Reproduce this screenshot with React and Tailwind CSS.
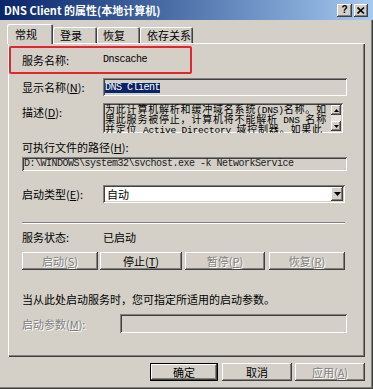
const sunken =
  'shadow-[inset_1px_1px_#808080,inset_-1px_-1px_#ffffff,inset_2px_2px_#404040,inset_-2px_-2px_#d4d0c8]';
const raised =
  'shadow-[inset_-1px_-1px_#404040,inset_1px_1px_#ffffff,inset_-2px_-2px_#808080]';
const mono = "font-['Liberation_Mono',monospace] text-[10px] tracking-[-0.5px]";
const descMono = "font-['Liberation_Mono',monospace] text-[9.5px] tracking-[-0.2px] leading-[0]";
const disabled = 'text-[#808080] [text-shadow:1px_1px_0_#ffffff]';

const Btn = ({ children, off, width, className = '' }) => (
  <div
    className={`h-full ${width} bg-[#d4d0c8] ${raised} flex items-center justify-center ${
      off ? disabled : 'text-black'
    } ${className}`}
  >
    {children}
  </div>
);

const Tab = ({ label, active, width, pad }) => (
  <div
    className={`${width} ${pad} bg-[#d4d0c8] flex items-center shadow-[inset_1px_1px_#ffffff,inset_-1px_0_#404040,inset_-2px_0_#808080] rounded-t-[2px] ${
      active ? 'h-[20px] relative z-10 -mb-px' : 'h-[16px] pb-[1px]'
    }`}
  >
    {label}
  </div>
);

export default function App() {
  return (
    <div className="w-[373px] h-[389px] bg-[#d4d0c8] overflow-hidden flex flex-col font-['Noto_Sans_CJK_SC',sans-serif] text-[11px] leading-[12px] text-black shadow-[inset_-1px_-1px_#404040,inset_-2px_-2px_#808080]">
      {/* title bar */}
      <div className="h-[20px] shrink-0 flex items-center pl-[4px] pr-[5px] bg-linear-to-r from-[#0a246a] to-[#a6caf0]">
        <span className="flex-1 text-white font-bold">DNS Client 的属性(本地计算机)</span>
        <div className={`w-[15px] h-[13px] bg-[#d4d0c8] ${raised} flex items-center justify-center font-['Liberation_Sans',sans-serif] font-bold text-[10px] leading-none`}>
          ?
        </div>
        <div className={`ml-[2px] w-[14px] h-[13px] bg-[#d4d0c8] ${raised} flex items-center justify-center`}>
          <svg width="8" height="7" viewBox="0 0 8 7">
            <path d="M0.5 0.5 L7 6.5 M7 0.5 L0.5 6.5" stroke="#000" strokeWidth="1.6" />
          </svg>
        </div>
      </div>

      {/* tabs */}
      <div className="h-[23px] shrink-0 flex items-end pl-[7px]">
        <Tab label="常规" active width="w-[46px]" pad="pl-[8px]" />
        <Tab label="登录" width="w-[44px]" pad="pl-[7px]" />
        <Tab label="恢复" width="w-[43px]" pad="pl-[6px]" />
        <Tab label="依存关系" width="w-[53px]" pad="pl-[7px]" />
      </div>

      {/* panel */}
      <div className="mx-[8px] h-[314px] shrink-0 flex flex-col shadow-[inset_1px_1px_#ffffff,inset_-1px_-1px_#404040,inset_-2px_-2px_#808080]">
        <div className="mt-[3px] ml-[1px] w-[183px] h-[28px] border-2 border-[#e3262d] rounded-[2px] flex items-center pl-[11px]">
          <span className="w-[81px]">服务名称:</span>
          <span className={mono}>Dnscache</span>
        </div>

        <div className="mt-[4px] ml-[14px] h-[18px] flex items-center">
          <span className="w-[81px]">
            显示名称(<u>N</u>):
          </span>
          <div className={`w-[244px] h-full bg-[#d4d0c8] ${sunken} pl-[2px] pt-[1px]`}>
            <span className={`${mono} bg-[#0a246a] text-white leading-[10px] inline-block`}>DNS Client</span>
          </div>
        </div>

        <div className="mt-[7px] ml-[14px] h-[30px] flex items-start">
          <span className="w-[81px] pt-[3px]">
            描述(<u>D</u>):
          </span>
          <div className={`w-[240px] h-full bg-[#d4d0c8] ${sunken} flex overflow-hidden`}>
            <div className="flex-1 min-w-0 pl-[2px] pt-[1px] text-[10px] leading-[10px] tracking-[0.8px] overflow-hidden whitespace-nowrap">
              <div className="h-[10px]">
                为此计算机解析和缓冲域名系统<span className={descMono}>(DNS)</span>名称。如
              </div>
              <div className="h-[10px]">
                果此服务被停止，计算机将不能解析<span className={descMono}> DNS </span>名称
              </div>
              <div className="h-[10px]">
                并定位<span className={descMono}> Active Directory </span>域控制器。如果此
              </div>
            </div>
            <div className="w-[12px] shrink-0 h-full py-[2px] pr-[2px]">
              <div className="w-[10px] h-full flex flex-col justify-between bg-[#e6e3dc]">
                <div className={`h-[10px] bg-[#d4d0c8] ${raised} flex items-center justify-center`}>
                  <svg width="5" height="3" viewBox="0 0 5 3">
                    <path d="M2.5 0 L5 3 L0 3 Z" fill="#000" />
                  </svg>
                </div>
                <div className={`h-[10px] bg-[#d4d0c8] ${raised} flex items-center justify-center`}>
                  <svg width="5" height="3" viewBox="0 0 5 3">
                    <path d="M0 0 L5 0 L2.5 3 Z" fill="#000" />
                  </svg>
                </div>
              </div>
            </div>
          </div>
        </div>

        <div className="mt-[8px] ml-[14px] h-[12px]">
          可执行文件的路径(<u>H</u>):
        </div>
        <div className={`mt-[4px] ml-[14px] w-[325px] h-[14px] bg-[#d4d0c8] ${sunken} flex items-center pl-[2px]`}>
          <span className={`${mono} text-[#202020]`}>D:\WINDOWS\system32\svchost.exe -k NetworkService</span>
        </div>

        <div className="mt-[14px] ml-[14px] h-[18px] flex items-center">
          <span className="w-[81px]">
            启动类型(<u>E</u>):
          </span>
          <div className={`w-[242px] h-full bg-white ${sunken} flex items-center p-[2px]`}>
            <span className="flex-1 pl-[2px]">自动</span>
            <div className={`w-[12px] h-full bg-[#d4d0c8] ${raised} flex items-center justify-center`}>
              <svg width="7" height="4" viewBox="0 0 7 4">
                <path d="M0 0 L7 0 L3.5 4 Z" fill="#000" />
              </svg>
            </div>
          </div>
        </div>

        <div className="mt-[19px] ml-[14px] w-[323px] h-[2px] border-t border-[#808080] border-b border-b-white" />

        <div className="mt-[7px] ml-[14px] h-[12px] flex items-center">
          <span className="w-[81px]">服务状态:</span>
          <span>已启动</span>
        </div>

        <div className="mt-[9px] ml-[14px] h-[18px] flex">
          <Btn off width="w-[76px]">
            启动(<u>S</u>)
          </Btn>
          <Btn width="w-[82px]" className="ml-[2px]">
            停止(<u>T</u>)
          </Btn>
          <Btn off width="w-[80px]" className="ml-[3px]">
            暂停(<u>P</u>)
          </Btn>
          <Btn off width="w-[76px]" className="ml-[4px]">
            恢复(<u>R</u>)
          </Btn>
        </div>

        <div className="mt-[23px] ml-[14px] h-[12px]">当从此处启动服务时，您可指定所适用的启动参数。</div>

        <div className="mt-[9px] ml-[14px] h-[19px] flex items-center">
          <span className={`w-[98px] ${disabled}`}>
            启动参数(<u>M</u>):
          </span>
          <div className={`w-[227px] h-full bg-[#d4d0c8] ${sunken}`} />
        </div>
      </div>

      {/* dialog buttons */}
      <div className="mt-[6px] h-[18px] shrink-0 flex justify-end pr-[8px]">
        <div className="w-[68px] h-full border border-black bg-[#d4d0c8] shadow-[inset_-1px_-1px_#404040,inset_1px_1px_#ffffff,inset_-2px_-2px_#808080] flex items-center justify-center">
          确定
        </div>
        <Btn width="w-[70px]" className="ml-[4px]">
          取消
        </Btn>
        <Btn off width="w-[70px]" className="ml-[3px]">
          应用(<u>A</u>)
        </Btn>
      </div>
    </div>
  );
}
